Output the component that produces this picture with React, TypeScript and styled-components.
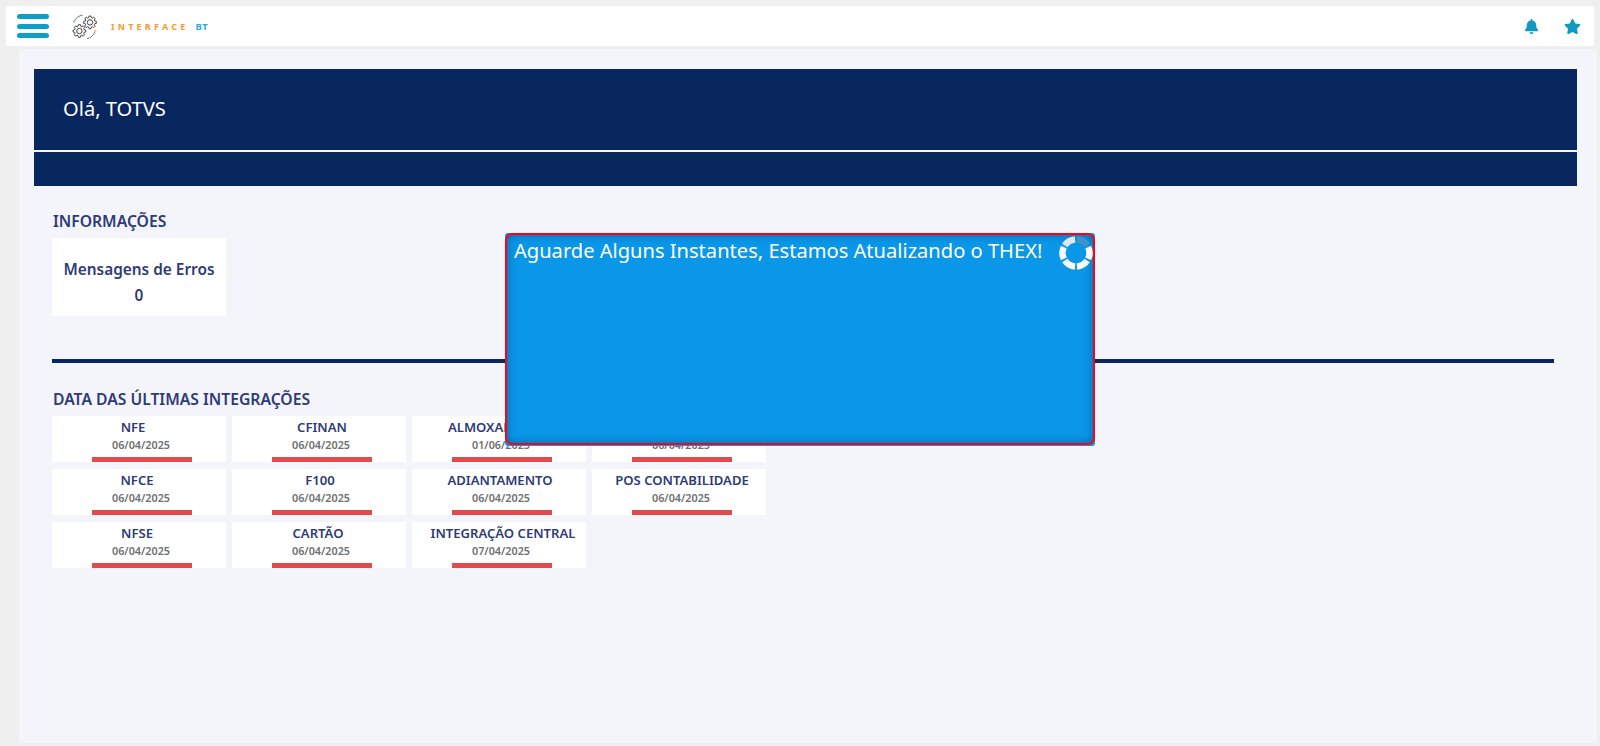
import React from "react";
import styled, { createGlobalStyle } from "styled-components";
import { FaBell, FaStar } from "react-icons/fa";

const Global = createGlobalStyle`
  html, body { margin: 0; padding: 0; background: #efefef; overflow: hidden; }
  body { font-family: "Noto Sans", "Open Sans", sans-serif; }
`;

const Page = styled.div`
  position: relative;
  width: 1600px;
  height: 746px;
  box-sizing: border-box;
  padding: 6px 6px 0;
  background: #efefef;
`;

const Header = styled.header`
  display: flex;
  align-items: center;
  height: 40px;
  background: #fff;
  padding: 0 13px 0 11px;
`;

const Burger = styled.div`
  display: flex;
  flex-direction: column;
  gap: 4.6px;
  width: 32px;
`;

const BurgerBar = styled.span`
  display: block;
  height: 5px;
  border-radius: 3px;
  background: #0f9ec6;
`;

const LogoMark = styled.svg`
  margin-left: 22px;
  width: 28px;
  height: 28px;
  flex: none;
  transform: translateY(1px);
`;

const LogoText = styled.span`
  margin-left: 12px;
  font-size: 9px;
  font-weight: 700;
  letter-spacing: 3.2px;
  color: #f79a34;
`;

const LogoSuffix = styled.span`
  margin-left: 7px;
  font-size: 9.5px;
  font-weight: 700;
  letter-spacing: 0.5px;
  color: #2aa8d4;
`;

const HeaderIcons = styled.div`
  margin-left: auto;
  display: flex;
  align-items: center;
  gap: 25px;
  color: #0f9ac2;
`;

const Main = styled.main`
  box-sizing: border-box;
  width: 1578px;
  height: 694px;
  margin: 3px 0 0 13px;
  padding: 20px 20px 0 15px;
  background: #f4f5fb;
`;

const Banner = styled.section`
  background: #08275f;
  height: 117px;
  display: flex;
  flex-direction: column;
`;

const Greeting = styled.div`
  box-sizing: border-box;
  height: 83px;
  padding: 0 0 2px 29px;
  display: flex;
  align-items: center;
  color: #fff;
  font-size: 20.1px;
  font-weight: 400;
  border-bottom: 2px solid #f4f5fb;
`;

const Content = styled.div`
  padding: 0 23px 0 18px;
`;

const SectionTitle = styled.h2<{ $top: number }>`
  margin: ${(p) => p.$top}px 0 0 1px;
  height: 20px;
  line-height: 20px;
  font-size: 15.7px;
  font-weight: 600;
  color: #2f3a78;
  white-space: nowrap;
`;

const InfoCard = styled.div`
  box-sizing: border-box;
  margin-top: 7px;
  width: 174px;
  height: 78px;
  background: #fff;
  text-align: center;
  padding-top: 19px;
  color: #2f3a78;
  font-size: 15.4px;
  font-weight: 600;
  line-height: 26px;
`;

const Divider = styled.hr`
  margin: 43px 0 0;
  border: 0;
  height: 4px;
  background: #08275f;
`;

const Grid = styled.div`
  margin-top: 7px;
  display: grid;
  grid-template-columns: repeat(4, 174px);
  grid-auto-rows: 46px;
  gap: 7px 6px;
`;

const Card = styled.article`
  position: relative;
  background: #fff;
  display: flex;
  flex-direction: column;
  align-items: center;
  overflow: hidden;
`;

const CardName = styled.div<{ $shift: number }>`
  margin-top: 2px;
  height: 18px;
  line-height: 18px;
  font-size: 13.1px;
  font-weight: 600;
  color: #2f3a78;
  white-space: nowrap;
  transform: translateX(${(p) => p.$shift}px);
`;

const CardDate = styled.div`
  height: 15px;
  line-height: 15px;
  margin-top: 1px;
  padding-left: 4px;
  font-size: 10.8px;
  font-weight: 600;
  color: #6f6f6f;
`;

const CardBar = styled.div`
  position: absolute;
  left: 40px;
  bottom: 0;
  width: 100px;
  height: 5px;
  background: #e04b4d;
`;

const Modal = styled.div`
  position: absolute;
  left: 505px;
  top: 233px;
  width: 590px;
  height: 213px;
  background: #0a97e8;
  border-radius: 3px;
`;

const ModalInner = styled.div`
  box-sizing: border-box;
  width: 590px;
  height: 212px;
  display: flex;
  justify-content: space-between;
  padding: 1px 0 0 7px;
  border: 2.5px solid #ff0010;
  border-radius: 7px;
  background: #0a97e8;
  box-shadow: inset 0 0 8px rgba(0, 50, 110, 0.5);
`;

const ModalText = styled.div`
  margin-top: 2px;
  font-size: 20.1px;
  line-height: 26px;
  font-weight: 400;
  color: #fff;
  white-space: nowrap;
`;

const Spinner = styled.svg`
  width: 34px;
  height: 34px;
  flex: none;
`;

const cards = [
  { name: "NFE", date: "06/04/2025", shift: -6 },
  { name: "CFINAN", date: "06/04/2025", shift: 3 },
  { name: "ALMOXARIFADO", date: "01/06/2025", shift: 1 },
  { name: "CONTABILIDADE", date: "06/04/2025", shift: 0 },
  { name: "NFCE", date: "06/04/2025", shift: -2 },
  { name: "F100", date: "06/04/2025", shift: 1 },
  { name: "ADIANTAMENTO", date: "06/04/2025", shift: 1 },
  { name: "POS CONTABILIDADE", date: "06/04/2025", shift: 3 },
  { name: "NFSE", date: "06/04/2025", shift: -2 },
  { name: "CARTÃO", date: "06/04/2025", shift: -1 },
  { name: "INTEGRAÇÃO CENTRAL", date: "07/04/2025", shift: 4 },
];

function gearPath(cx: number, cy: number, r: number, teeth: number) {
  const pts: string[] = [];
  const step = (Math.PI * 2) / teeth;
  for (let i = 0; i < teeth; i++) {
    const a = i * step;
    const o = r * 1.0;
    const n = r * 0.76;
    const seq: [number, number][] = [
      [n, a - step * 0.36],
      [o, a - step * 0.2],
      [o, a + step * 0.2],
      [n, a + step * 0.36],
    ];
    for (const [rad, ang] of seq) {
      pts.push(`${(cx + rad * Math.cos(ang)).toFixed(2)} ${(cy + rad * Math.sin(ang)).toFixed(2)}`);
    }
  }
  return `M${pts.join("L")}Z`;
}

function Logo() {
  return (
    <LogoMark viewBox="0 0 28 28" fill="none">
      <path d={gearPath(19, 9.4, 6.4, 8)} stroke="#444" strokeWidth="1" />
      <circle cx="19" cy="9.4" r="2.7" stroke="#444" strokeWidth="1" />
      <path d={gearPath(8.4, 18, 6.4, 8)} stroke="#444" strokeWidth="1" />
      <circle cx="8.4" cy="18" r="2.7" stroke="#444" strokeWidth="1" />
      <path d="M3.4 8.2 C5 4.6 8 2.6 11.6 2.2" stroke="#666" strokeWidth="0.9" />
      <circle cx="3" cy="8.6" r="1.2" fill="#7cc7e4" />
      <path d="M24 18.6 C22.6 22.4 19.8 25 16 25.8" stroke="#666" strokeWidth="0.9" />
      <circle cx="24.2" cy="18.2" r="1.2" fill="#f8c48c" />
    </LogoMark>
  );
}

const segments = [
  { from: 34, to: 86, color: "#f6f8fa" },
  { from: 94, to: 146, color: "#f6f8fa" },
  { from: 154, to: 206, color: "#f6f8fa" },
  { from: 214, to: 266, color: "#dfe7ed" },
  { from: 274, to: 326, color: "#3f93c9" },
  { from: 334, to: 386, color: "#f6f8fa" },
];

function arcPath(from: number, to: number) {
  const r = 13.5;
  const pt = (deg: number) => {
    const a = (deg * Math.PI) / 180;
    return `${(17 + r * Math.cos(a)).toFixed(2)} ${(17 + r * Math.sin(a)).toFixed(2)}`;
  };
  return `M${pt(from)}A${r} ${r} 0 0 1 ${pt(to)}`;
}

function LoadingRing() {
  return (
    <Spinner viewBox="0 0 34 34" fill="none">
      {segments.map((s) => (
        <path key={s.from} d={arcPath(s.from, s.to)} stroke={s.color} strokeWidth="6.5" />
      ))}
    </Spinner>
  );
}

export default function App() {
  return (
    <Page>
      <Global />
      <Header>
        <Burger>
          <BurgerBar />
          <BurgerBar />
          <BurgerBar />
        </Burger>
        <Logo />
        <LogoText>INTERFACE</LogoText>
        <LogoSuffix>BT</LogoSuffix>
        <HeaderIcons>
          <FaBell size={15} />
          <FaStar size={17} />
        </HeaderIcons>
      </Header>
      <Main>
        <Banner>
          <Greeting>Olá, TOTVS</Greeting>
        </Banner>
        <Content>
          <SectionTitle $top={25}>INFORMAÇÕES</SectionTitle>
          <InfoCard>
            Mensagens de Erros
            <br />0
          </InfoCard>
          <Divider />
          <SectionTitle $top={26}>DATA DAS ÚLTIMAS INTEGRAÇÕES</SectionTitle>
          <Grid>
            {cards.map((c) => (
              <Card key={c.name}>
                <CardName $shift={c.shift}>{c.name}</CardName>
                <CardDate>{c.date}</CardDate>
                <CardBar />
              </Card>
            ))}
          </Grid>
        </Content>
      </Main>
      <Modal>
        <ModalInner>
          <ModalText>Aguarde Alguns Instantes, Estamos Atualizando o THEX!</ModalText>
          <LoadingRing />
        </ModalInner>
      </Modal>
    </Page>
  );
}
